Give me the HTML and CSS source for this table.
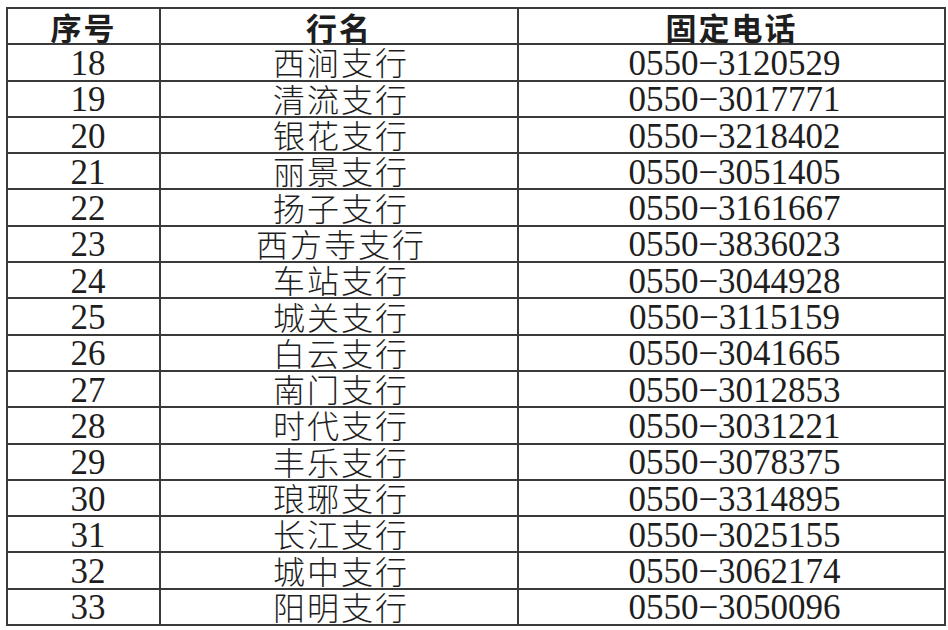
FILE: index.html
```html
<!DOCTYPE html>
<html lang="zh-CN">
<head>
<meta charset="utf-8">
<title>支行固定电话</title>
<link rel="stylesheet" href="styles.css">
</head>
<body>
<table class="branch-table">
  <colgroup>
    <col class="col-no">
    <col class="col-name">
    <col class="col-phone">
  </colgroup>
  <thead>
    <tr><th>序号</th><th>行名</th><th>固定电话</th></tr>
  </thead>
  <tbody>
    <tr><td class="num">18</td><td class="name">西涧支行</td><td class="phone">0550−3120529</td></tr>
    <tr><td class="num">19</td><td class="name">清流支行</td><td class="phone">0550−3017771</td></tr>
    <tr><td class="num">20</td><td class="name">银花支行</td><td class="phone">0550−3218402</td></tr>
    <tr><td class="num">21</td><td class="name">丽景支行</td><td class="phone">0550−3051405</td></tr>
    <tr><td class="num">22</td><td class="name">扬子支行</td><td class="phone">0550−3161667</td></tr>
    <tr><td class="num">23</td><td class="name">西方寺支行</td><td class="phone">0550−3836023</td></tr>
    <tr><td class="num">24</td><td class="name">车站支行</td><td class="phone">0550−3044928</td></tr>
    <tr><td class="num">25</td><td class="name">城关支行</td><td class="phone">0550−3115159</td></tr>
    <tr><td class="num">26</td><td class="name">白云支行</td><td class="phone">0550−3041665</td></tr>
    <tr><td class="num">27</td><td class="name">南门支行</td><td class="phone">0550−3012853</td></tr>
    <tr><td class="num">28</td><td class="name">时代支行</td><td class="phone">0550−3031221</td></tr>
    <tr><td class="num">29</td><td class="name">丰乐支行</td><td class="phone">0550−3078375</td></tr>
    <tr><td class="num">30</td><td class="name">琅琊支行</td><td class="phone">0550−3314895</td></tr>
    <tr><td class="num">31</td><td class="name">长江支行</td><td class="phone">0550−3025155</td></tr>
    <tr><td class="num">32</td><td class="name">城中支行</td><td class="phone">0550−3062174</td></tr>
    <tr><td class="num">33</td><td class="name">阳明支行</td><td class="phone">0550−3050096</td></tr>
  </tbody>
</table>
</body>
</html>
```

FILE: styles.css
```css
html, body {
  margin: 0;
  padding: 0;
  background: #ffffff;
}

body {
  padding: 7px 0 0 6px;
}

.branch-table {
  border-collapse: collapse;
  table-layout: fixed;
  width: 938px;
  height: 617px;
  border: 2px solid #3a3a3a;
  color: #1e1e1e;
}

.branch-table tr {
  height: 36.3px;
}

.col-no { width: 153px; }
.col-name { width: 358px; }
.col-phone { width: 427px; }

.branch-table th,
.branch-table td {
  border: 2px solid #3a3a3a;
  padding: 0;
  text-align: center;
  vertical-align: middle;
  line-height: 30px;
  white-space: nowrap;
}

.branch-table th {
  font-family: "Noto Sans CJK SC", sans-serif;
  font-weight: 700;
  font-size: 31px;
  letter-spacing: 2px;
  padding-top: 1px;
}

.branch-table td.num,
.branch-table td.phone {
  font-family: "Liberation Serif", "Noto Sans CJK SC", serif;
  font-size: 35px;
  padding-top: 3px;
}

.branch-table td.num {
  padding-left: 9px;
}

.branch-table td.phone {
  padding-left: 6px;
}

.branch-table td.name {
  font-family: "Noto Sans CJK SC", sans-serif;
  font-weight: 300;
  font-size: 32px;
  letter-spacing: 2px;
  padding-left: 4px;
  padding-bottom: 2px;
}
```
